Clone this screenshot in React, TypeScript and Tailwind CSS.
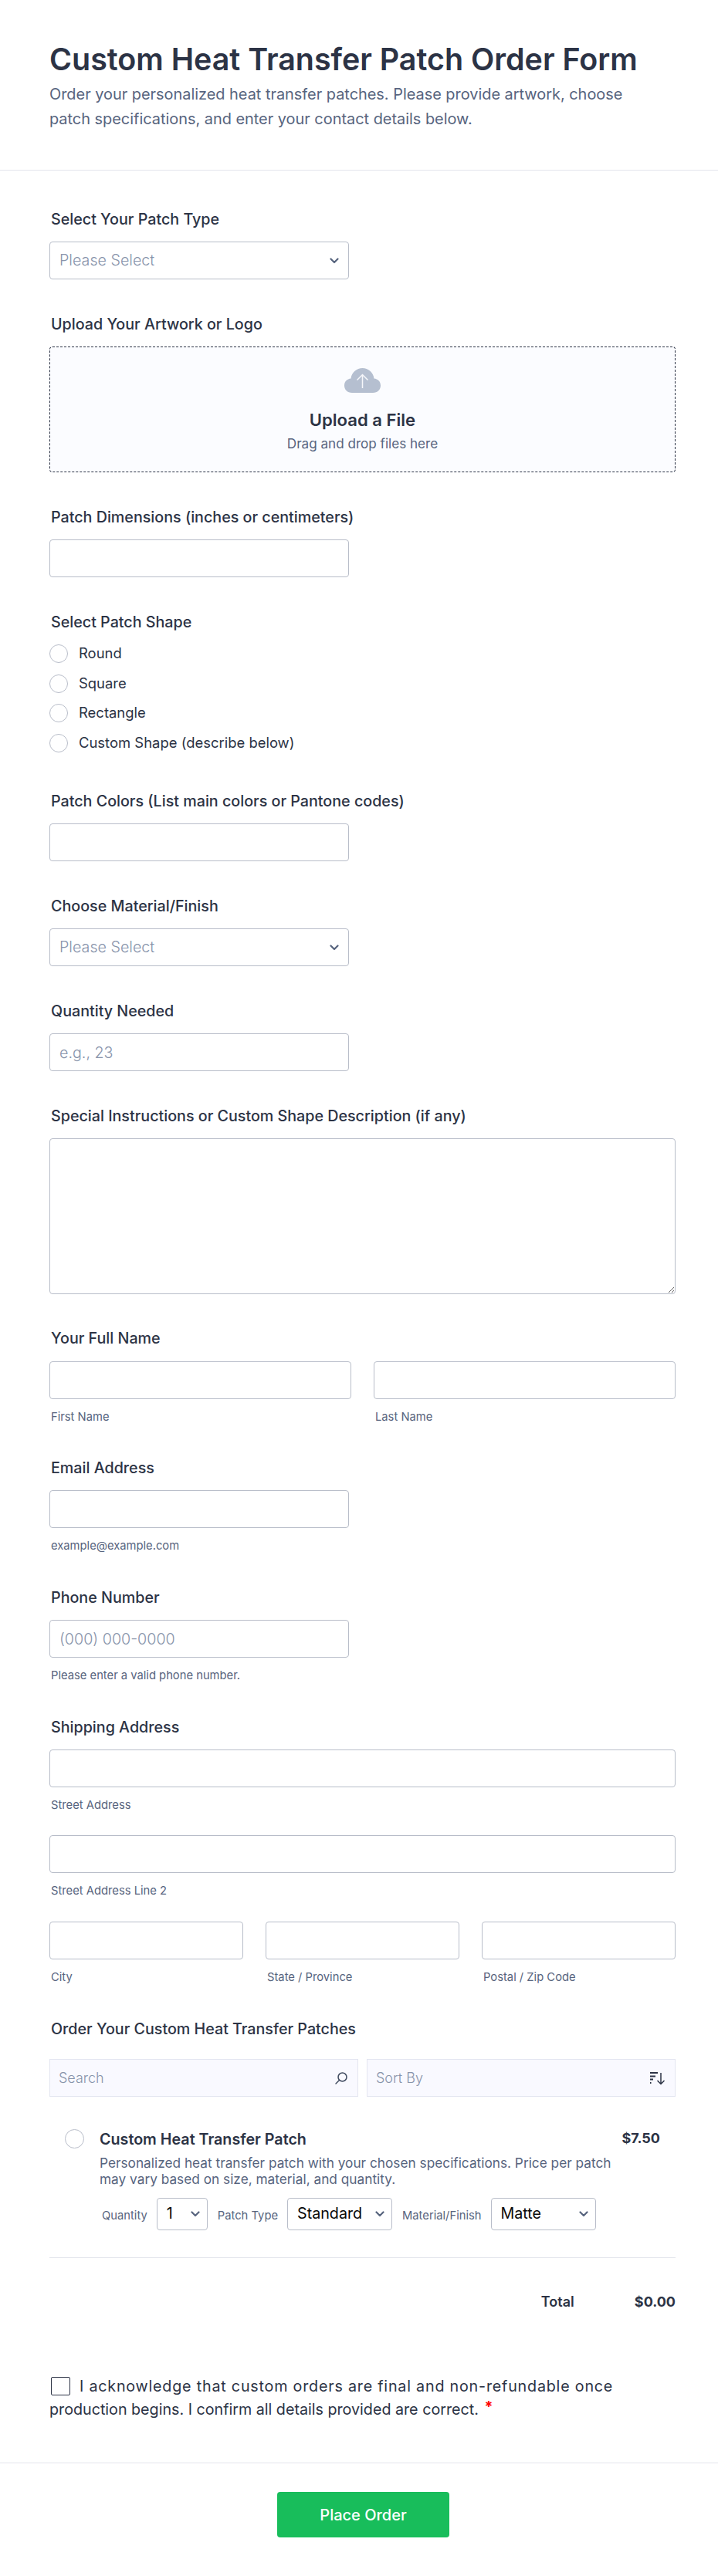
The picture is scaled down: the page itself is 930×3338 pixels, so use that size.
import React from 'react';

const inputClass =
  'block h-[49px] w-full rounded-[4px] border border-[#b8bdc9] bg-white px-3 text-[19.700px] text-[#2c3345] placeholder:text-[#8894ab] placeholder:font-light outline-none';

function Label({ children }: { children: React.ReactNode }) {
  return <label className="mb-[17px] block h-6 pl-0.5 text-[19.700px] leading-6 font-medium text-[#2c3345]">{children}</label>;
}

function Sub({ children }: { children: React.ReactNode }) {
  return <div className="mt-[15px] h-[17px] pl-0.5 text-[14.750px] leading-4 text-[#57647e]">{children}</div>;
}

function Chevron({ className }: { className: string }) {
  return (
    <svg viewBox="0 0 12 8" fill="none" className={className}>
      <path d="M1.5 1.5 6 6l4.5-4.5" stroke="#57647e" strokeWidth="2.200" strokeLinecap="round" strokeLinejoin="round" />
    </svg>
  );
}

function FormSelect({ placeholder }: { placeholder: string }) {
  return (
    <div className="relative w-[388px]">
      <select className="block h-[49px] w-full appearance-none rounded-[4px] border border-[#b8bdc9] bg-white px-3 text-[19.700px] font-light text-[#8894ab] outline-none">
        <option>{placeholder}</option>
      </select>
      <Chevron className="absolute top-[21px] right-[13px] h-2 w-3" />
    </div>
  );
}

function ItemSelect({ value, width, label }: { value: string; width: string; label: string }) {
  return (
    <>
      <span className="mt-1 text-[14.750px] text-[#57647e]">{label}</span>
      <div className={`relative mr-px ${width}`}>
        <select className="block h-[42px] w-full appearance-none rounded-[4px] border border-[#b8bdc9] bg-white pl-3 text-[19.700px] text-[#0a0a0a] outline-none">
          <option>{value}</option>
        </select>
        <Chevron className="absolute top-[17px] right-[10px] h-2 w-3" />
      </div>
    </>
  );
}

export default function App() {
  return (
    <div className="h-[3338px] w-full overflow-hidden bg-white font-['Inter',sans-serif] text-[#2c3345]">
      <header className="h-[221px] border-b border-[#e3e5ec] px-16 pt-[53px]">
        <h1 className="text-[39.400px] leading-[48px] font-semibold">Custom Heat Transfer Patch Order Form</h1>
        <p className="mt-[5px] w-[790px] text-[19.900px] leading-8 text-[#57647e]">
          Order your personalized heat transfer patches. Please provide artwork, choose patch specifications, and enter
          your contact details below.
        </p>
      </header>

      <main className="flex flex-col gap-[46px] pt-[51px] pr-[55px] pl-16">
        <div>
          <Label>Select Your Patch Type</Label>
          <FormSelect placeholder="Please Select" />
        </div>

        <div>
          <Label>Upload Your Artwork or Logo</Label>
          <div className="flex h-[163px] flex-col items-center rounded-[4px] border border-dashed border-[#2c3345] bg-[#fbfcff] pt-[27px]">
            <svg viewBox="0 0 47 32" className="h-8 w-[47px]">
              <path
                d="M10 32C4 32 0 28 0 22.500C0 17.500 3.500 14 8.500 13.500C9.500 5.500 16 0 23.500 0C31 0 37.500 5.500 38.500 13.500C43.500 14 47 17.500 47 22.500C47 28 43 32 37 32Z"
                fill="#b5bfd0"
              />
              <path d="M23.500 26V9M16.500 15.500l7-7 7 7" fill="none" stroke="#f5f6fa" strokeWidth="1.500" />
            </svg>
            <div className="mt-[23px] text-[22.100px] leading-6 font-semibold">Upload a File</div>
            <div className="mt-[7px] text-[17.100px] leading-6 text-[#57647e]">Drag and drop files here</div>
          </div>
        </div>

        <div>
          <Label>Patch Dimensions (inches or centimeters)</Label>
          <input className={`${inputClass} !w-[388px]`} />
        </div>

        <div className="mb-[5.500px]">
          <Label>Select Patch Shape</Label>
          <div className="mt-[4px] flex flex-col gap-[14.500px]">
            {['Round', 'Square', 'Rectangle', 'Custom Shape (describe below)'].map((shape) => (
              <label key={shape} className="flex h-6 items-center gap-[14px] text-[18.450px] text-[#2c3345]">
                <span className="h-6 w-6 rounded-full border border-[#b8bdc9]" />
                {shape}
              </label>
            ))}
          </div>
        </div>

        <div>
          <Label>Patch Colors (List main colors or Pantone codes)</Label>
          <input className={`${inputClass} !w-[388px]`} />
        </div>

        <div>
          <Label>Choose Material/Finish</Label>
          <FormSelect placeholder="Please Select" />
        </div>

        <div>
          <Label>Quantity Needed</Label>
          <input className={`${inputClass} !w-[388px]`} placeholder="e.g., 23" />
        </div>

        <div className="-mb-px">
          <Label>Special Instructions or Custom Shape Description (if any)</Label>
          <textarea className="block h-[202px] w-full rounded-[4px] border border-[#b8bdc9] bg-white outline-none" />
        </div>

        <div>
          <Label>Your Full Name</Label>
          <div className="mt-[18px] grid grid-cols-2 gap-[29px]">
            <div>
              <input className={inputClass} />
              <Sub>First Name</Sub>
            </div>
            <div>
              <input className={inputClass} />
              <Sub>Last Name</Sub>
            </div>
          </div>
        </div>

        <div className="-mt-px">
          <Label>Email Address</Label>
          <input className={`${inputClass} !w-[388px]`} />
          <Sub>example@example.com</Sub>
        </div>

        <div>
          <Label>Phone Number</Label>
          <input className={`${inputClass} !w-[388px]`} placeholder="(000) 000-0000" />
          <Sub>Please enter a valid phone number.</Sub>
        </div>

        <div>
          <Label>Shipping Address</Label>
          <input className={inputClass} />
          <Sub>Street Address</Sub>
          <input className={`${inputClass} mt-[30px]`} />
          <Sub>Street Address Line 2</Sub>
          <div className="mt-[31px] grid grid-cols-3 gap-[29px]">
            <div>
              <input className={inputClass} />
              <Sub>City</Sub>
            </div>
            <div>
              <input className={inputClass} />
              <Sub>State / Province</Sub>
            </div>
            <div>
              <input className={inputClass} />
              <Sub>Postal / Zip Code</Sub>
            </div>
          </div>
        </div>

        <div>
          <Label>Order Your Custom Heat Transfer Patches</Label>
          <div className="mt-[27px] grid grid-cols-2 gap-[11px]">
            <div className="flex h-[49px] items-center justify-between border border-[#e3e5f0] bg-[#f9f9ff] pr-3 pl-[11px] text-[18px] font-light text-[#8894ab]">
              Search
              <svg viewBox="0 0 18 18" fill="none" className="h-[18px] w-[18px]" stroke="#3f4a5f" strokeWidth="1.500">
                <circle cx="10.500" cy="7.500" r="5.500" />
                <path d="M6.500 11.500 2 16" strokeLinecap="round" />
              </svg>
            </div>
            <div className="flex h-[49px] items-center justify-between border border-[#e3e5f0] bg-[#f9f9ff] pr-3 pl-[11px] text-[18px] font-light text-[#8894ab]">
              Sort By
              <svg viewBox="0 0 21 18" fill="none" className="h-[18px] w-[21px]" stroke="#2c3345">
                <path d="M1 2h10M1 6.500h7M1 10.500h4M1 15h1.500" strokeWidth="2" />
                <path d="M15 2v14M10.500 12l4.500 4.500 4.500-4.500" strokeWidth="1.500" />
              </svg>
            </div>
          </div>

          <div className="mt-[42px] flex h-[167px] items-start border-b border-[#e3e5ec] pr-5 pl-5">
            <span className="h-[25px] w-[25px] shrink-0 rounded-full border border-[#b8bdc9]" />
            <div className="ml-5 min-w-0 flex-1">
              <div className="mt-px text-[19.700px] leading-6 font-semibold">Custom Heat Transfer Patch</div>
              <p className="mt-[8px] w-[680px] text-[17.250px] leading-[21px] text-[#57647e]">
                Personalized heat transfer patch with your chosen specifications. Price per patch may vary based on size,
                material, and quantity.
              </p>
              <div className="mt-[14px] flex items-center gap-3 pl-[3px]">
                <ItemSelect label="Quantity" value="1" width="w-[66px]" />
                <ItemSelect label="Patch Type" value="Standard" width="w-[136px]" />
                <ItemSelect label="Material/Finish" value="Matte" width="w-[136px]" />
              </div>
            </div>
            <div className="text-[18px] leading-6 font-bold">$7.50</div>
          </div>

          <div className="mt-[44px] flex h-6 items-center justify-end text-[18px] font-semibold">
            <span className="w-[121px]">Total</span>
            <span className="text-[18px] font-bold">$0.00</span>
          </div>
        </div>

        <div className="mt-[39px] w-[760px] text-[19.700px] leading-[27px] text-[#2c3345]">
          <span className="mr-[12px] ml-0.5 inline-block h-6 w-[25px] rounded-[2px] border border-[#2c3345] align-[-5px]" />
          <span className="tracking-[0.8px]">I acknowledge that custom orders are final and non-refundable once</span>{' '}
          production begins. I confirm all details provided are correct.{' '}
          <span className="ml-0.5 align-[3px] font-bold text-[#f00]">*</span>
        </div>
      </main>

      <footer className="mt-[55px] flex h-[147px] justify-center border-t border-[#e3e5ec] pt-[37px] pl-[11px]">
        <button className="h-[59px] w-[223px] rounded-[4px] bg-[#18bd5b] text-[20px] font-medium text-white">Place Order</button>
      </footer>
    </div>
  );
}
